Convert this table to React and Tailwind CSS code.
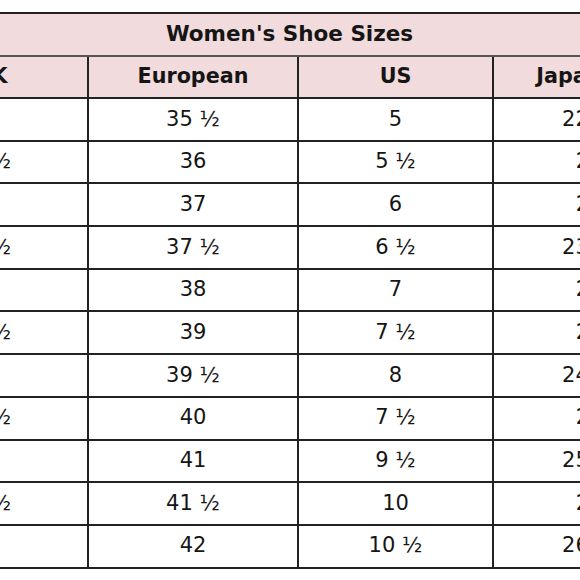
import React from 'react';

const rows = [
  ['3', '35 ½', '5', '22 ½'],
  ['3 ½', '36', '5 ½', '23'],
  ['4', '37', '6', '23'],
  ['4 ½', '37 ½', '6 ½', '23 ½'],
  ['5', '38', '7', '24'],
  ['5 ½', '39', '7 ½', '24'],
  ['6', '39 ½', '8', '24 ½'],
  ['6 ½', '40', '7 ½', '25'],
  ['7', '41', '9 ½', '25 ½'],
  ['7 ½', '41 ½', '10', '26'],
  ['8', '42', '10 ½', '26 ½'],
];

export default function App() {
  return (
    <div className="w-[580px] h-[580px] overflow-hidden bg-white pt-[12px]">
      <table
        className="ml-[-107px] w-[791px] border-collapse table-fixed text-[#151515] text-[21px]"
        style={{ fontFamily: '"DejaVu Sans", Verdana, sans-serif' }}
      >
        <colgroup>
          <col className="w-[194px]" />
          <col className="w-[210px]" />
          <col className="w-[195px]" />
          <col className="w-[192px]" />
        </colgroup>
        <thead>
          <tr className="h-[43px] bg-[#f1dbdc]">
            <th
              colSpan={4}
              className="border-t-2 border-b-2 border-t-[#222] border-b-[#555] font-bold text-center text-[21.5px]"
            >
              Women's Shoe Sizes
            </th>
          </tr>
          <tr className="h-[42px] bg-[#f1dbdc]">
            {['UK', 'European', 'US', 'Japanese'].map((h) => (
              <th
                key={h}
                className="border-2 border-[#222] border-t-[#555] font-bold text-center text-[20.7px]"
              >
                {h}
              </th>
            ))}
          </tr>
        </thead>
        <tbody>
          {rows.map((r, ri) => (
            <tr key={ri} className="h-[42.7px]">
              {r.map((c, ci) => (
                <td key={ci} className="border-2 border-[#222] text-center font-normal">
                  {c}
                </td>
              ))}
            </tr>
          ))}
        </tbody>
      </table>
    </div>
  );
}
